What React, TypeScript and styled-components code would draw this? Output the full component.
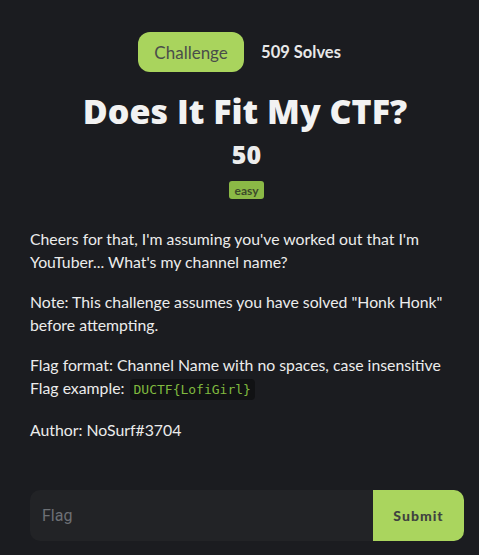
import React from "react";
import styled, { createGlobalStyle } from "styled-components";

const Global = createGlobalStyle`
  html, body { margin: 0; padding: 0; background: #1b1c20; }
  body { font-family: Lato, "Noto Sans", sans-serif; }
`;

const Modal = styled.div`
  width: 479px;
  height: 555px;
  box-sizing: border-box;
  background: #1b1c20;
  padding: 32px 15px 14px 30px;
  display: flex;
  flex-direction: column;
`;

const Header = styled.div`
  display: flex;
  justify-content: center;
  align-items: center;
  gap: 17px;
  margin-right: 15px;
`;

const Pill = styled.div`
  background: #a9d45d;
  color: #4a4d4a;
  font-family: Lato, sans-serif;
  font-size: 17px;
  height: 40px;
  width: 106px;
  border-radius: 12px;
  display: flex;
  align-items: center;
  justify-content: center;
`;

const Solves = styled.div`
  color: #e8e8e8;
  font-weight: 700;
  font-size: 16.5px;
`;

const Title = styled.h1`
  margin: 18px 4px 0 0;
  text-align: center;
  color: #f2f2f2;
  font-family: "Open Sans", sans-serif;
  font-weight: 800;
  font-size: 34px;
  line-height: 42px;
`;

const Points = styled.div`
  text-align: center;
  color: #ececec;
  font-family: "Open Sans", sans-serif;
  font-weight: 800;
  font-size: 25px;
  line-height: 32px;
  margin-top: 6px;
  margin-right: 1px;
`;

const TagRow = styled.div`
  display: flex;
  justify-content: center;
  margin-top: 11px;
  margin-right: 1px;
`;

const Tag = styled.span`
  background: #8bb946;
  color: #3b4a2a;
  font-family: Lato, sans-serif;
  font-weight: 700;
  font-size: 12px;
  border-radius: 3px;
  height: 18px;
  padding: 0 6px;
  display: inline-flex;
  align-items: center;
`;

const Body = styled.div`
  margin-top: 28px;
  color: #ececec;
  font-size: 15.8px;
  line-height: 23px;
`;

const P = styled.p<{ $gap?: number }>`
  margin: 0 0 ${(p) => (p.$gap ?? 17)}px;
`;

const Code = styled.code`
  background: #111214;
  color: #80b93f;
  font-family: "DejaVu Sans Mono", monospace;
  font-size: 13px;
  padding: 3px 4px;
  border-radius: 4px;
  margin-left: 1px;
`;

const Form = styled.form`
  margin-top: auto;
  display: flex;
  height: 51px;
  border-radius: 10px;
  overflow: hidden;
`;

const Input = styled.input`
  flex: 1;
  background: #222326;
  border: none;
  outline: none;
  padding: 0 12px;
  color: #ddd;
  font-family: Roboto, sans-serif;
  font-size: 16px;
  &::placeholder { color: #6d7075; }
`;

const Submit = styled.button`
  width: 91px;
  border: none;
  background: #aad55e;
  color: #3f4240;
  font-family: Lato, sans-serif;
  font-weight: 900;
  font-size: 14px;
  letter-spacing: 1px;
`;

export default function App() {
  return (
    <>
      <Global />
      <Modal>
        <Header>
          <Pill>Challenge</Pill>
          <Solves>509 Solves</Solves>
        </Header>
        <Title>Does It Fit My CTF?</Title>
        <Points>50</Points>
        <TagRow>
          <Tag>easy</Tag>
        </TagRow>
        <Body>
          <P>Cheers for that, I'm assuming you've worked out that I'm YouTuber... What's my channel name?</P>
          <P>Note: This challenge assumes you have solved "Honk Honk" before attempting.</P>
          <P $gap={17}>
            Flag format: Channel Name with no spaces, case insensitive
            <br />
            Flag example: <Code>DUCTF{"{"}LofiGirl{"}"}</Code>
          </P>
          <P $gap={0}>Author: NoSurf#3704</P>
        </Body>
        <Form onSubmit={(e) => e.preventDefault()}>
          <Input placeholder="Flag" />
          <Submit type="submit">Submit</Submit>
        </Form>
      </Modal>
    </>
  );
}
